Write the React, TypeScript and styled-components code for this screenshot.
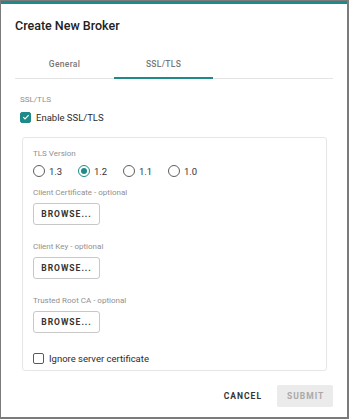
import styled, { createGlobalStyle } from "styled-components";

const TEAL = "#1f8b88";

const GlobalStyle = createGlobalStyle`
  html, body {
    margin: 0;
    padding: 0;
    background: #7b7b7b;
    font-family: Roboto, "Liberation Sans", Arial, sans-serif;
  }
  * {
    box-sizing: border-box;
  }
`;

const Dialog = styled.div`
  margin: 1px 0 0 1px;
  width: 346px;
  height: 416px;
  background: #fff;
  border-top: 3px solid ${TEAL};
  padding: 0 14px 0 14px;
  display: flex;
  flex-direction: column;
`;

const Title = styled.h2`
  margin: 14px 0 0 0;
  font-size: 12.5px;
  line-height: 16px;
  font-weight: 500;
  color: #222;
`;

const TabBar = styled.div`
  margin-top: 16px;
  display: flex;
  box-shadow: inset 0 -1px 0 #e4e4e4;
`;

const Tab = styled.div<{ $active?: boolean }>`
  width: 99px;
  height: 29px;
  display: flex;
  align-items: center;
  justify-content: center;
  font-size: 8.5px;
  font-weight: 500;
  letter-spacing: 0.3px;
  color: #777;
  padding-bottom: 2px;
  box-shadow: ${(p) => (p.$active ? `inset 0 -2px 0 ${TEAL}` : "none")};
`;

const Section = styled.div`
  padding-left: 5px;
  margin-top: 16px;
`;

const SmallLabel = styled.div`
  font-size: 8px;
  line-height: 10px;
  color: #909090;
`;

const CheckRow = styled.label`
  display: flex;
  align-items: center;
  height: 14px;
  gap: 5px;
  font-size: 9.5px;
  color: #2b2b2b;
`;

const Box = styled.span<{ $checked?: boolean }>`
  width: 11px;
  height: 11px;
  border-radius: 2px;
  border: 1.3px solid ${(p) => (p.$checked ? TEAL : "#5a5a5a")};
  background: ${(p) => (p.$checked ? TEAL : "#fff")};
  display: inline-flex;
  align-items: center;
  justify-content: center;
`;

const Card = styled.div`
  margin: 13px 0 0 2px;
  width: 305px;
  border: 1px solid #e6e6e6;
  border-radius: 3px;
  padding: 11px 10px 5px 10px;
`;

const RadioRow = styled.div`
  display: flex;
  height: 14px;
  margin-top: 5px;
`;

const RadioItem = styled.label`
  width: 45px;
  display: flex;
  align-items: center;
  gap: 4px;
  font-size: 9.5px;
  color: #333;
`;

const Circle = styled.span<{ $checked?: boolean }>`
  width: 12px;
  height: 12px;
  border-radius: 50%;
  border: 1.3px solid ${(p) => (p.$checked ? TEAL : "#5e5e5e")};
  display: inline-flex;
  align-items: center;
  justify-content: center;

  &::after {
    content: "";
    width: 6px;
    height: 6px;
    border-radius: 50%;
    background: ${(p) => (p.$checked ? TEAL : "transparent")};
  }
`;

const Field = styled.div<{ $first?: boolean }>`
  margin-top: ${(p) => (p.$first ? 10 : 17)}px;
  display: flex;
  flex-direction: column;
  align-items: flex-start;
  gap: 5px;
`;

const BrowseButton = styled.button`
  width: 67px;
  height: 22px;
  border: 1px solid #c8c8c8;
  border-radius: 3px;
  background: #fff;
  font-family: inherit;
  font-size: 8.5px;
  font-weight: 700;
  letter-spacing: 1px;
  color: #333;
  padding: 0;
`;

const IgnoreRow = styled.div`
  margin-top: 18px;
`;

const Footer = styled.div`
  margin-top: auto;
  margin-bottom: 10px;
  display: flex;
  justify-content: flex-end;
  align-items: center;
  gap: 5px;
`;

const FooterButton = styled.button<{ $disabled?: boolean }>`
  height: 22px;
  padding: 0 10px;
  border: none;
  border-radius: 2px;
  font-family: inherit;
  font-size: 8.5px;
  font-weight: 700;
  letter-spacing: 1px;
  background: ${(p) => (p.$disabled ? "#ebebeb" : "transparent")};
  color: ${(p) => (p.$disabled ? "#a9a9a9" : "#333")};
  width: ${(p) => (p.$disabled ? "56px" : "auto")};
`;

const Check = () => (
  <svg width="8" height="8" viewBox="0 0 24 24">
    <path d="M4 12.5l5 5L20 6.5" fill="none" stroke="#fff" strokeWidth="3.5" />
  </svg>
);

const versions = ["1.3", "1.2", "1.1", "1.0"];
const files = [
  "Client Certificate - optional",
  "Client Key - optional",
  "Trusted Root CA - optional",
];

export default function App() {
  return (
    <>
      <GlobalStyle />
      <Dialog>
        <Title>Create New Broker</Title>
        <TabBar>
          <Tab>General</Tab>
          <Tab $active>SSL/TLS</Tab>
        </TabBar>
        <Section>
          <SmallLabel>SSL/TLS</SmallLabel>
          <CheckRow style={{ marginTop: 5 }}>
            <Box $checked>
              <Check />
            </Box>
            Enable SSL/TLS
          </CheckRow>
          <Card>
            <SmallLabel>TLS Version</SmallLabel>
            <RadioRow>
              {versions.map((v) => (
                <RadioItem key={v}>
                  <Circle $checked={v === "1.2"} />
                  {v}
                </RadioItem>
              ))}
            </RadioRow>
            {files.map((f, i) => (
              <Field key={f} $first={i === 0}>
                <SmallLabel>{f}</SmallLabel>
                <BrowseButton>BROWSE...</BrowseButton>
              </Field>
            ))}
            <IgnoreRow>
              <CheckRow>
                <Box />
                Ignore server certificate
              </CheckRow>
            </IgnoreRow>
          </Card>
        </Section>
        <Footer>
          <FooterButton>CANCEL</FooterButton>
          <FooterButton $disabled>SUBMIT</FooterButton>
        </Footer>
      </Dialog>
    </>
  );
}
